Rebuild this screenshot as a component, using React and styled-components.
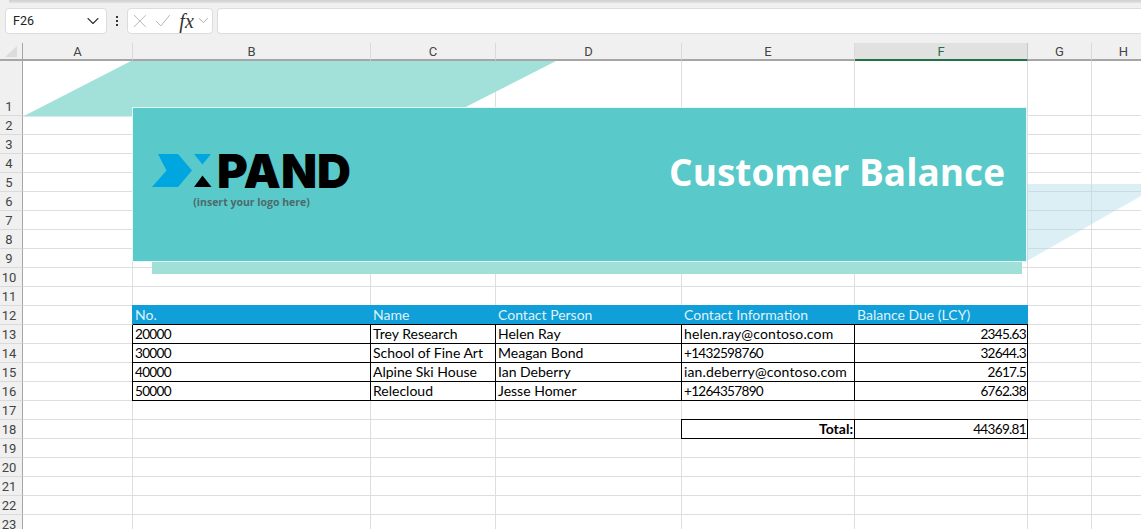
import styled, { createGlobalStyle } from "styled-components";
import { ChevronDown } from "lucide-react";

const GRID_LINE = "#dedede";
const COLUMNS = ["A", "B", "C", "D", "E", "F", "G", "H"];
const ROW_COUNT = 23;

const customers = [
    ["20000", "Trey Research", "Helen Ray", "helen.ray@contoso.com", "2345.63"],
    ["30000", "School of Fine Art", "Meagan Bond", "+1432598760", "32644.3"],
    ["40000", "Alpine Ski House", "Ian Deberry", "ian.deberry@contoso.com", "2617.5"],
    ["50000", "Relecloud", "Jesse Homer", "+1264357890", "6762.38"],
];
const headings = ["No.", "Name", "Contact Person", "Contact Information", "Balance Due (LCY)"];

const GlobalStyle = createGlobalStyle`
    html, body {
        margin: 0;
        padding: 0;
        width: 100%;
        height: 100%;
        overflow: hidden;
        background: #f0f0f0;
    }
`

const Window = styled.div`
    width: 1141px;
    height: 529px;
    overflow: hidden;
    background: #f0f0f0;
    font-family: "Roboto", "Liberation Sans", sans-serif;
`

const TopStrip = styled.div`
    height: 3px;
    margin-left: 9px;
    background: linear-gradient(#cfcfcf, #e2e2e2);
`

const FormulaBar = styled.div`
    display: flex;
    align-items: center;
    height: 40px;
    padding: 0 0 5px 5px;
    box-sizing: border-box;
`

const Box = styled.div`
    display: flex;
    align-items: center;
    height: 26px;
    box-sizing: border-box;
    background: #fff;
    border: 1px solid #dcdcdc;
    border-radius: 4px;
    width: ${props => props.$width}px;
    margin-right: ${props => props.$gap || 0}px;
    flex-shrink: 0;
`

const NameBox = styled(Box)`
    justify-content: space-between;
    padding: 0 3px 0 7px;
    font-size: 12.5px;
    color: #222;
`

const Dots = styled.div`
    display: flex;
    flex-direction: column;
    gap: 2px;
    width: 20px;
    align-items: center;
    & > i {
        display: block;
        width: 2px;
        height: 2px;
        background: #333;
    }
`

const FunctionBox = styled(Box)`
    padding-left: 5px;
    gap: 8px;
    color: #b4b4b4;
`

const FxLabel = styled.span`
    font-family: "Liberation Serif", serif;
    font-style: italic;
    font-weight: 400;
    font-size: 20px;
    line-height: 20px;
    color: #333;
    margin-left: 1px;
    width: 14px;
`

const FormulaInput = styled(Box)`
    flex: 1;
    border-right: 0;
    border-radius: 4px 0 0 4px;
`

const Sheet = styled.div`
    position: relative;
    display: grid;
    grid-template-columns: 23px 110px 238px 125px 186px 173px 173px 64px 64px;
    grid-template-rows: 18px 55px repeat(22, 19px);
    width: 1156px;
`

const ColumnHead = styled.div`
    display: flex;
    align-items: center;
    justify-content: center;
    font-size: 13px;
    color: ${props => props.$active ? "#1e7145" : "#444"};
    background: ${props => props.$active ? "#e1e1e1" : "#f0f0f0"};
    border-right: 1px solid ${props => props.$active ? "#c6c6c6" : "#dadada"};
    border-bottom: 2px solid ${props => props.$active ? "#217346" : "#a6a6a6"};
    box-sizing: border-box;
`

const Corner = styled.div`
    display: flex;
    align-items: center;
    justify-content: center;
    background: #f0f0f0;
    border-right: 1px solid #a6a6a6;
    border-bottom: 2px solid #a6a6a6;
    box-sizing: border-box;
    &::after {
        content: "";
        width: 0;
        height: 0;
        border-left: 12px solid transparent;
        border-bottom: 11px solid #dcdcdc;
    }
`

const RowHead = styled.div`
    display: flex;
    align-items: flex-end;
    justify-content: center;
    padding-right: 4px;
    font-size: 13px;
    line-height: 17px;
    color: #444;
    background: #f0f0f0;
    border-right: 1px solid #a6a6a6;
    border-bottom: 1px solid #dadada;
    box-sizing: border-box;
`

const Cell = styled.div`
    display: flex;
    align-items: flex-end;
    justify-content: ${props => props.$right ? "flex-end" : "flex-start"};
    padding: 0 1px 0 2px;
    font-family: "Lato", "Liberation Sans", sans-serif;
    font-size: ${props => props.$numeric ? "13.6px" : "14px"};
    letter-spacing: ${props => props.$numeric ? "-0.7px" : props.$email ? "0.15px" : "0"};
    line-height: 18px;
    font-weight: ${props => props.$bold ? 700 : 400};
    white-space: nowrap;
    color: #000;
    background: #fff;
    border-right: 1px solid ${props => props.$ink ? "#000" : GRID_LINE};
    border-bottom: 1px solid ${props => props.$ink ? "#000" : GRID_LINE};
    box-shadow: ${props => props.$edge || "none"};
    box-sizing: border-box;
`

const HeadCell = styled(Cell)`
    background: #109fd8;
    color: #dff3fb;
    border-right: 0;
    border-bottom: 1px solid #000;
`

const BackShape = styled.svg`
    position: absolute;
    pointer-events: none;
    left: ${props => props.$left}px;
    top: ${props => props.$top}px;
`

const Banner = styled.div`
    position: absolute;
    left: 132px;
    top: 64px;
    width: 895px;
    height: 155px;
    display: flex;
    align-items: center;
    justify-content: space-between;
    padding: 0 21px 0 19px;
    box-sizing: border-box;
    background: #5ac9ca;
    border: 1px solid #e4f6f5;
`

const BannerShadow = styled.div`
    position: absolute;
    left: 152px;
    top: 219px;
    width: 870px;
    height: 12px;
    background: #a0e0d8;
`

const Logo = styled.div`
    display: flex;
    flex-direction: column;
    align-items: center;
    margin-top: -7px;
`

const LogoMark = styled.div`
    display: flex;
    align-items: center;
    gap: 5px;
    height: 34px;
`

const LogoWord = styled.span`
    font-family: "Inter", sans-serif;
    font-weight: 900;
    font-size: 47px;
    line-height: 34px;
    color: #000;
`

const LogoNote = styled.span`
    font-family: "Open Sans", sans-serif;
    font-weight: 700;
    font-size: 10.5px;
    color: #4d6a6c;
    margin-top: 7px;
`

const Title = styled.h1`
    margin: 0 0 26px 0;
    font-family: "Open Sans", sans-serif;
    font-weight: 700;
    font-size: 37px;
    color: #fff;
`

function Toolbar() {
    return (
        <FormulaBar>
            <NameBox $width={102}>
                F26
                <ChevronDown size={20} strokeWidth={1.3} color="#333" />
            </NameBox>
            <Dots><i /><i /><i /></Dots>
            <FunctionBox $width={86} $gap={4}>
                <svg width="14" height="14" viewBox="0 0 14 14" fill="none" stroke="currentColor">
                    <path d="M1 1l12 12M13 1L1 13" />
                </svg>
                <svg width="16" height="13" viewBox="0 0 16 13" fill="none" stroke="currentColor">
                    <path d="M1 7l5 5L15 1" />
                </svg>
                <FxLabel>fx</FxLabel>
                <ChevronDown size={17} strokeWidth={1} color="#888" style={{ marginLeft: -6 }} />
            </FunctionBox>
            <FormulaInput />
        </FormulaBar>
    )
}

// decides what goes in each worksheet cell
function renderCell(rowNumber, colIndex) {
    const key = `${rowNumber}-${colIndex}`
    if (rowNumber === 12 && colIndex >= 1 && colIndex <= 5) {
        const edge = colIndex === 1
            ? "-1px 0 0 #109fd8, 0 -1px 0 #109fd8, -1px -1px 0 #109fd8"
            : "0 -1px 0 #109fd8"
        return <HeadCell key={key} $edge={edge}>{headings[colIndex - 1]}</HeadCell>
    }
    if (rowNumber >= 13 && rowNumber <= 16 && colIndex >= 1 && colIndex <= 5) {
        const edge = colIndex === 1 ? "-1px 0 0 #000" : "none"
        const value = customers[rowNumber - 13][colIndex - 1]
        return (
            <Cell
                key={key}
                $ink
                $edge={edge}
                $right={colIndex === 5}
                $numeric={/^[+\d.]+$/.test(value)}
                $email={value.includes("@")}
            >
                {value}
            </Cell>
        )
    }
    if (rowNumber === 18 && colIndex === 4) {
        return <Cell key={key} $ink $bold $right $edge="-1px 0 0 #000, 0 -1px 0 #000, -1px -1px 0 #000">Total:</Cell>
    }
    if (rowNumber === 18 && colIndex === 5) {
        return <Cell key={key} $ink $right $numeric $edge="0 -1px 0 #000">44369.81</Cell>
    }
    return <Cell key={key} />
}

export default function App() {
    const rows = Array.from({ length: ROW_COUNT }, (_, i) => i + 1)

    return (
        <Window>
            <GlobalStyle />
            <TopStrip />
            <Toolbar />
            <Sheet>
                <Corner />
                {COLUMNS.map(col => (
                    <ColumnHead key={col} $active={col === "F"}>{col}</ColumnHead>
                ))}
                {rows.map(rowNumber => [
                    <RowHead key={rowNumber}>{rowNumber}</RowHead>,
                    ...COLUMNS.map((_, colIndex) => renderCell(rowNumber, colIndex)),
                ])}

                <BackShape $left={23} $top={18} width="540" height="56">
                    <polygon points="0,55.5 108,0 533,0 424,55.5" fill="#a2e0da" />
                </BackShape>
                <BackShape $left={1027} $top={141} width="120" height="80">
                    <polygon points="0,0 114,0 114,12 0,77" fill="#a9d8e6" fillOpacity="0.42" />
                </BackShape>
                <BannerShadow />
                <Banner>
                    <Logo>
                        <LogoMark>
                            <svg width="60" height="34" viewBox="0 0 60 34">
                                <polygon points="6,0 26,0 40,16.5 26,33 0,33 14.5,16.5" fill="#00a6e0" />
                                <polygon points="42,0 59,0 50.5,10.5" fill="#00a6e0" />
                                <polygon points="42,33 59.5,33 50.5,21.5" fill="#000" />
                            </svg>
                            <LogoWord>PAND</LogoWord>
                        </LogoMark>
                        <LogoNote>(insert your logo here)</LogoNote>
                    </Logo>
                    <Title>Customer Balance</Title>
                </Banner>
            </Sheet>
        </Window>
    )
}
